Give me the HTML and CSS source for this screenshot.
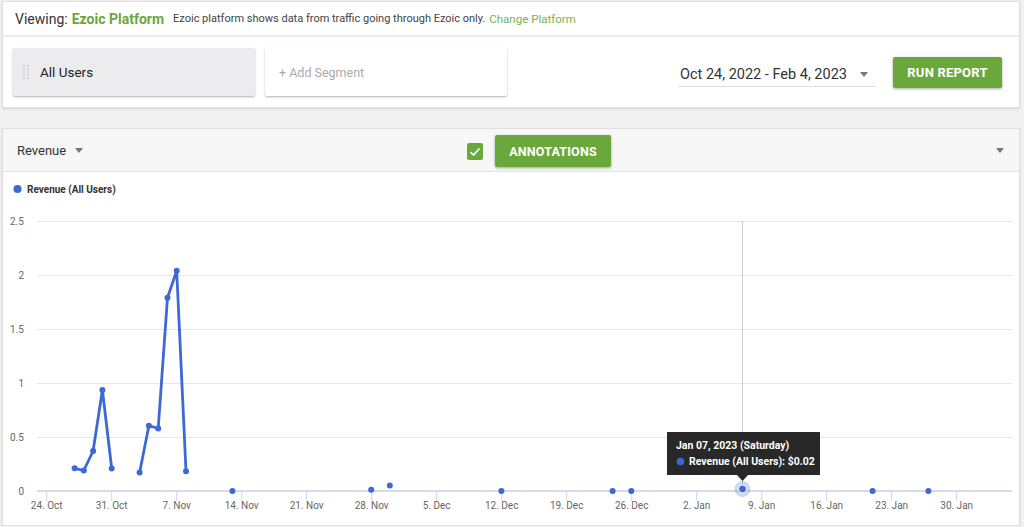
FILE: index.html
```html
<!DOCTYPE html>
<html lang="en">
<head>
    <meta charset="UTF-8">
    <title>Reports - Ezoic Platform</title>
    <link rel="stylesheet" href="styles.css">
</head>
<body>
<div class="page">

    <div class="card top-card">
        <div class="viewing">
            <span class="viewing-label">Viewing:</span>
            <span class="platform-name">Ezoic Platform</span>
            <span class="platform-desc">Ezoic platform shows data from traffic going through Ezoic only.</span>
            <a class="change-link" href="#">Change Platform</a>
        </div>

        <div class="segments">
            <div class="segment-box active">
                <svg class="drag-handle" width="6" height="15" viewBox="0 0 6 15">
                    <g fill="#c9c9c9">
                        <circle cx="1" cy="1" r="0.9"/><circle cx="5" cy="1" r="0.9"/>
                        <circle cx="1" cy="4" r="0.9"/><circle cx="5" cy="4" r="0.9"/>
                        <circle cx="1" cy="7" r="0.9"/><circle cx="5" cy="7" r="0.9"/>
                        <circle cx="1" cy="10" r="0.9"/><circle cx="5" cy="10" r="0.9"/>
                        <circle cx="1" cy="13" r="0.9"/><circle cx="5" cy="13" r="0.9"/>
                    </g>
                </svg>
                <span>All Users</span>
            </div>
            <div class="segment-box add">+ Add Segment</div>

            <div class="date-picker">
                <span>Oct 24, 2022 - Feb 4, 2023</span>
                <span class="caret"></span>
            </div>
            <button class="btn run-btn">RUN REPORT</button>
        </div>
    </div>

    <div class="card chart-card">
        <div class="chart-head">
            <div class="metric-select">
                <span>Revenue</span>
                <span class="caret"></span>
            </div>
            <span class="check-box">
                <svg width="12" height="10" viewBox="0 0 12 10">
                    <polyline points="1.5,5 4.5,8 10.5,1.5" fill="none" stroke="#fff" stroke-width="1.6"/>
                </svg>
            </span>
            <button class="btn annot-btn">ANNOTATIONS</button>
            <span class="caret head-caret"></span>
        </div>

        <svg class="chart" width="1016" height="353" viewBox="3 172 1016 353">
            <!-- legend -->
            <circle cx="17.5" cy="189" r="4" fill="#3d68d5"/>
            <text class="legend" x="27" y="192.5">Revenue (All Users)</text>

            <!-- grid -->
            <g stroke="#e6e6e6" stroke-width="1">
                <line x1="37" y1="221.5" x2="1012" y2="221.5"/>
                <line x1="37" y1="275.5" x2="1012" y2="275.5"/>
                <line x1="37" y1="329.5" x2="1012" y2="329.5"/>
                <line x1="37" y1="383.5" x2="1012" y2="383.5"/>
                <line x1="37" y1="437.5" x2="1012" y2="437.5"/>
            </g>
            <g class="axis-label" text-anchor="end">
                <text x="24" y="225">2.5</text>
                <text x="24" y="279">2</text>
                <text x="24" y="333">1.5</text>
                <text x="24" y="387">1</text>
                <text x="24" y="441">0.5</text>
                <text x="24" y="495">0</text>
            </g>

            <!-- x axis -->
            <line x1="37" y1="491" x2="1012" y2="491" stroke="#d3dbec" stroke-width="2"/>
            <g stroke="#ccd6eb" stroke-width="1">
                <line x1="46.7" y1="491" x2="46.7" y2="501"/>
                <line x1="111.7" y1="491" x2="111.7" y2="501"/>
                <line x1="176.7" y1="491" x2="176.7" y2="501"/>
                <line x1="241.7" y1="491" x2="241.7" y2="501"/>
                <line x1="306.7" y1="491" x2="306.7" y2="501"/>
                <line x1="371.7" y1="491" x2="371.7" y2="501"/>
                <line x1="436.7" y1="491" x2="436.7" y2="501"/>
                <line x1="501.7" y1="491" x2="501.7" y2="501"/>
                <line x1="566.7" y1="491" x2="566.7" y2="501"/>
                <line x1="631.7" y1="491" x2="631.7" y2="501"/>
                <line x1="696.7" y1="491" x2="696.7" y2="501"/>
                <line x1="761.7" y1="491" x2="761.7" y2="501"/>
                <line x1="826.7" y1="491" x2="826.7" y2="501"/>
                <line x1="891.7" y1="491" x2="891.7" y2="501"/>
                <line x1="956.7" y1="491" x2="956.7" y2="501"/>
            </g>
            <g class="axis-label" text-anchor="middle">
                <text x="46.7" y="509">24. Oct</text>
                <text x="111.7" y="509">31. Oct</text>
                <text x="176.7" y="509">7. Nov</text>
                <text x="241.7" y="509">14. Nov</text>
                <text x="306.7" y="509">21. Nov</text>
                <text x="371.7" y="509">28. Nov</text>
                <text x="436.7" y="509">5. Dec</text>
                <text x="501.7" y="509">12. Dec</text>
                <text x="566.7" y="509">19. Dec</text>
                <text x="631.7" y="509">26. Dec</text>
                <text x="696.7" y="509">2. Jan</text>
                <text x="761.7" y="509">9. Jan</text>
                <text x="826.7" y="509">16. Jan</text>
                <text x="891.7" y="509">23. Jan</text>
                <text x="956.7" y="509">30. Jan</text>
            </g>

            <!-- crosshair -->
            <line x1="742.5" y1="221" x2="742.5" y2="491" stroke="#cccccc" stroke-width="1"/>

            <!-- series -->
            <g fill="none" stroke="#3d68d5" stroke-width="2.8" stroke-linejoin="round">
                <polyline points="74.6,468.3 83.8,470.5 93.1,451 102.4,390 111.7,468.5"/>
                <polyline points="139.6,472.5 148.9,425.7 158.2,428.5 167.5,297.7 176.7,270.7 186,471.3"/>
            </g>
            <g fill="#3d68d5">
                <circle cx="74.6" cy="468.3" r="3"/>
                <circle cx="83.8" cy="470.5" r="3"/>
                <circle cx="93.1" cy="451" r="3"/>
                <circle cx="102.4" cy="390" r="3"/>
                <circle cx="111.7" cy="468.5" r="3"/>
                <circle cx="139.6" cy="472.5" r="3"/>
                <circle cx="148.9" cy="425.7" r="3"/>
                <circle cx="158.2" cy="428.5" r="3"/>
                <circle cx="167.5" cy="297.7" r="3"/>
                <circle cx="176.7" cy="270.7" r="3"/>
                <circle cx="186" cy="471.3" r="3"/>
                <circle cx="232.4" cy="491" r="3"/>
                <circle cx="371.2" cy="489.7" r="3"/>
                <circle cx="389.8" cy="485.5" r="3"/>
                <circle cx="501.4" cy="491" r="3"/>
                <circle cx="612.6" cy="491" r="3"/>
                <circle cx="631.3" cy="491" r="3"/>
                <circle cx="872.6" cy="491" r="3"/>
                <circle cx="928.4" cy="491" r="3"/>
            </g>

            <!-- hovered point -->
            <circle cx="742.5" cy="489" r="7.5" fill="#3d68d5" fill-opacity="0.25" stroke="#3d68d5" stroke-opacity="0.4" stroke-dasharray="1 1.5"/>
            <circle cx="742.5" cy="489" r="4" fill="#3d68d5" stroke="#fff" stroke-width="1"/>

            <!-- tooltip -->
            <path d="M667 432 H820 V475 H748 L742.5 481 L737 475 H667 Z" fill="#1c1c1c" fill-opacity="0.95"/>
            <text class="tip" x="676" y="449">Jan 07, 2023 (Saturday)</text>
            <circle cx="680.5" cy="461.5" r="3.8" fill="#3d68d5"/>
            <text class="tip" x="689" y="465">Revenue (All Users): $0.02</text>
        </svg>
    </div>

</div>
</body>
</html>
```

FILE: styles.css
```css
body {
    margin: 0;
    background: #f1f1f1;
    font-family: Roboto, "Liberation Sans", sans-serif;
    color: #333;
}

.page {
    padding: 1px 4px 0 2px;
}

.card {
    background: #fff;
    border: 1px solid #e0e0e0;
    box-shadow: 0 1px 2px rgba(0, 0, 0, 0.12);
}

/* Top bar */
.viewing {
    height: 33px;
    display: flex;
    align-items: center;
    padding-left: 12px;
    border-bottom: 2px solid #ededed;
}
.viewing-label {
    font-size: 14px;
    color: #333;
}
.platform-name {
    font-size: 14px;
    font-weight: bold;
    color: #6aa83b;
    margin-left: 4px;
}
.platform-desc {
    font-size: 11px;
    color: #444;
    margin-left: 9px;
}
.change-link {
    font-size: 11.5px;
    color: #77b255;
    text-decoration: none;
    margin-left: 4px;
}

.segments {
    display: flex;
    align-items: center;
    padding: 11px 17px 11px 10px;
}
.segment-box {
    width: 242px;
    height: 48px;
    box-sizing: border-box;
    display: flex;
    align-items: center;
    font-size: 13.5px;
    border-radius: 2px;
    box-shadow: 0 1px 2px rgba(0, 0, 0, 0.3);
    margin-right: 10px;
}
.segment-box.active {
    background: #ececee;
    padding-left: 10px;
    color: #222;
}
.drag-handle {
    margin-right: 11px;
}
.segment-box.add {
    background: #fff;
    padding-left: 14px;
    font-size: 12.5px;
    color: #aaa;
}

.caret {
    display: inline-block;
    width: 0;
    height: 0;
    border-left: 4px solid transparent;
    border-right: 4px solid transparent;
    border-top: 5px solid #777;
}

.date-picker {
    margin-left: auto;
    width: 198px;
    height: 30px;
    box-sizing: border-box;
    padding: 5px 8px 0 2px;
    display: flex;
    align-items: center;
    justify-content: space-between;
    border-bottom: 1px solid #dedede;
    font-size: 14.5px;
    color: #333;
}

.btn {
    border: none;
    border-radius: 2px;
    background: #6aa83b;
    color: #fff;
    font-family: Roboto, "Liberation Sans", sans-serif;
    font-weight: bold;
    font-size: 13px;
    letter-spacing: 0.2px;
    box-shadow: 0 1px 3px rgba(0, 0, 0, 0.35);
    cursor: pointer;
    padding: 0;
}
.run-btn {
    width: 109px;
    height: 31px;
    margin-left: 17px;
}

/* Chart card */
.chart-card {
    margin-top: 20px;
}
.chart-head {
    height: 42px;
    display: flex;
    align-items: center;
    padding: 0 14px 0 14px;
    background: #f7f7f7;
    border-bottom: 1px solid #e3e3e3;
}
.metric-select {
    width: 450px;
    display: flex;
    align-items: center;
    font-size: 13px;
    color: #333;
}
.metric-select .caret {
    margin-left: 9px;
}
.check-box {
    width: 16px;
    height: 17px;
    background: #6aa83b;
    border-radius: 2px;
    display: flex;
    align-items: center;
    justify-content: center;
    margin-top: 3px;
}
.annot-btn {
    width: 116px;
    height: 32px;
    margin-left: 12px;
    font-size: 12.5px;
    margin-top: 2px;
}
.head-caret {
    margin-left: auto;
    margin-right: 1px;
}

.chart {
    display: block;
}
.legend {
    font-family: Roboto, "Liberation Sans", sans-serif;
    font-size: 10px;
    font-weight: bold;
    fill: #333;
}
.axis-label {
    font-family: Roboto, "Liberation Sans", sans-serif;
    font-size: 10px;
    fill: #666;
}
.tip {
    font-family: Roboto, "Liberation Sans", sans-serif;
    font-size: 10.5px;
    font-weight: bold;
    fill: #fff;
}
```
